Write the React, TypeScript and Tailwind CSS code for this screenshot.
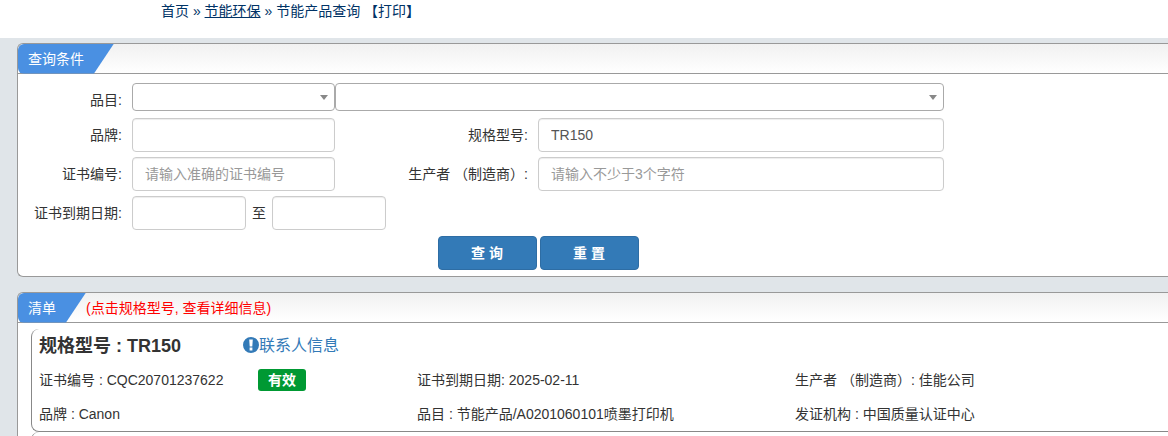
import type { InputHTMLAttributes, ReactNode } from 'react'

const ROW = 'grid grid-cols-[114px_203fr_203fr_406fr_224fr] items-start'

function Panel({ title, note, children }: { title: string; note?: string; children: ReactNode }) {
  return (
    <section className="rounded-l-md border border-r-0 border-[#999] bg-white">
      <header className="flex h-[30px] items-center rounded-tl-md border-b border-[#999] bg-linear-to-b from-[#f1f1f1] to-white">
        <h2 className="h-[30px] rounded-l-md bg-[#4a90e2] pr-[30px] pl-[10px] leading-[30px] text-white [clip-path:polygon(0_0,100%_0,calc(100%-20px)_100%,0_100%)]">
          {title}
        </h2>
        {note && <p className="text-[#f00]">{note}</p>}
      </header>
      {children}
    </section>
  )
}

function Label({ htmlFor, children }: { htmlFor: string; children: ReactNode }) {
  return (
    <label htmlFor={htmlFor} className="py-[7px] pr-[10px] text-right whitespace-nowrap">
      {children}
    </label>
  )
}

function TextInput(props: InputHTMLAttributes<HTMLInputElement>) {
  return (
    <input
      type="text"
      className="h-[34px] w-full min-w-0 rounded border border-[#ccc] bg-white px-3 text-[#555] shadow-[inset_0_1px_1px_rgba(0,0,0,0.075)] placeholder:text-[#999]"
      {...props}
    />
  )
}

function Select({ id, label }: { id: string; label?: string }) {
  return (
    <div className="relative">
      <select id={id} aria-label={label} className="block h-7 w-full appearance-none rounded border border-[#aaa] bg-white pr-5 pl-2">
        <option value="" />
      </select>
      <svg viewBox="0 0 8 5" className="pointer-events-none absolute top-3 right-[7px] h-[5px] w-2" fill="#888">
        <path d="M0 0h8L4 5z" />
      </svg>
    </div>
  )
}

function Button({ type, children }: { type: 'submit' | 'reset'; children: ReactNode }) {
  return (
    <button type={type} className="h-[34px] w-[99px] rounded border border-[#2e6da4] bg-[#337ab7] font-bold text-white">
      {children}
    </button>
  )
}

function SearchForm() {
  return (
    <form className="pt-[9px] pb-[6px]" onSubmit={(e) => e.preventDefault()}>
      <div className={`${ROW} mb-px`}>
        <Label htmlFor="category">品目:</Label>
        <Select id="category" />
        <div className="col-span-2">
          <Select id="subcategory" label="品目明细" />
        </div>
      </div>
      <div className={`${ROW} mb-[5px]`}>
        <Label htmlFor="brand">品牌:</Label>
        <TextInput id="brand" />
        <Label htmlFor="model">规格型号:</Label>
        <TextInput id="model" defaultValue="TR150" />
      </div>
      <div className={`${ROW} mb-[5px]`}>
        <Label htmlFor="cert">证书编号:</Label>
        <TextInput id="cert" placeholder="请输入准确的证书编号" />
        <Label htmlFor="maker">生产者 （制造商）:</Label>
        <TextInput id="maker" placeholder="请输入不少于3个字符" />
      </div>
      <div className={`${ROW} mb-[6px]`}>
        <Label htmlFor="from">证书到期日期:</Label>
        <div className="col-span-2 flex items-center gap-[6px]">
          <div className="w-[114px]">
            <TextInput id="from" />
          </div>
          <label htmlFor="to">至</label>
          <div className="w-[114px]">
            <TextInput id="to" />
          </div>
        </div>
      </div>
      <div className={ROW}>
        <div className="col-span-3 col-start-2 flex justify-center gap-[3px]">
          <Button type="submit">查 询</Button>
          <Button type="reset">重 置</Button>
        </div>
      </div>
    </form>
  )
}

function ResultCard() {
  return (
    <article className="ml-[13px] rounded-l-lg border-b border-l border-[#888] pl-[7px]">
      <div className="flex h-[34px] items-center">
        <h3 className="w-[204px] text-lg font-bold">规格型号 : TR150</h3>
        <a href="#contact" className="flex items-start text-base leading-5 text-[#337ab7]">
          <svg viewBox="0 0 16 16" className="mt-px size-4" fill="currentColor">
            <path
              fillRule="evenodd"
              d="M8 0a8 8 0 1 1 0 16A8 8 0 0 1 8 0zM6.2 2.6 6.7 9.4h2.6l.5-6.8zM6.6 10.6v2.8h2.8v-2.8z"
            />
          </svg>
          联系人信息
        </a>
      </div>
      <div className="grid grid-cols-[378fr_378fr_373fr]">
        <div className="flex h-[34px] items-center">
          <p className="w-[219px]">证书编号 : CQC20701237622</p>
          <span className="h-[22px] w-12 rounded-[3px] bg-[#093] text-center leading-[22px] font-bold text-white">有效</span>
        </div>
        <p className="leading-[34px]">证书到期日期: 2025-02-11</p>
        <p className="leading-[34px]">生产者 （制造商）: 佳能公司</p>
        <p className="leading-[34px]">品牌 : Canon</p>
        <p className="leading-[34px]">品目 : 节能产品/A0201060101喷墨打印机</p>
        <p className="leading-[34px]">发证机构 : 中国质量认证中心</p>
      </div>
    </article>
  )
}

export default function App() {
  return (
    <div className="h-screen overflow-hidden bg-[#e0e5e9] font-['Liberation_Sans','Noto_Sans_CJK_SC',sans-serif] text-[14px] leading-5 text-[#333]">
      <nav className="h-[38px] bg-white pt-px pl-[161px] text-[#036]">
        <a href="#home">首页</a> » <a href="#energy" className="underline">节能环保</a> » 节能产品查询 <a href="#print">【打印】</a>
      </nav>
      <main className="flex flex-col gap-[15px] pt-[5px] pl-[17px]">
        <Panel title="查询条件">
          <SearchForm />
        </Panel>
        <Panel title="清单" note="(点击规格型号, 查看详细信息)">
          <div className="pt-[6px]">
            <ResultCard />
            <div className="ml-[13px] h-[34px] rounded-l-lg border-b border-l border-[#888]" />
          </div>
        </Panel>
      </main>
    </div>
  )
}
